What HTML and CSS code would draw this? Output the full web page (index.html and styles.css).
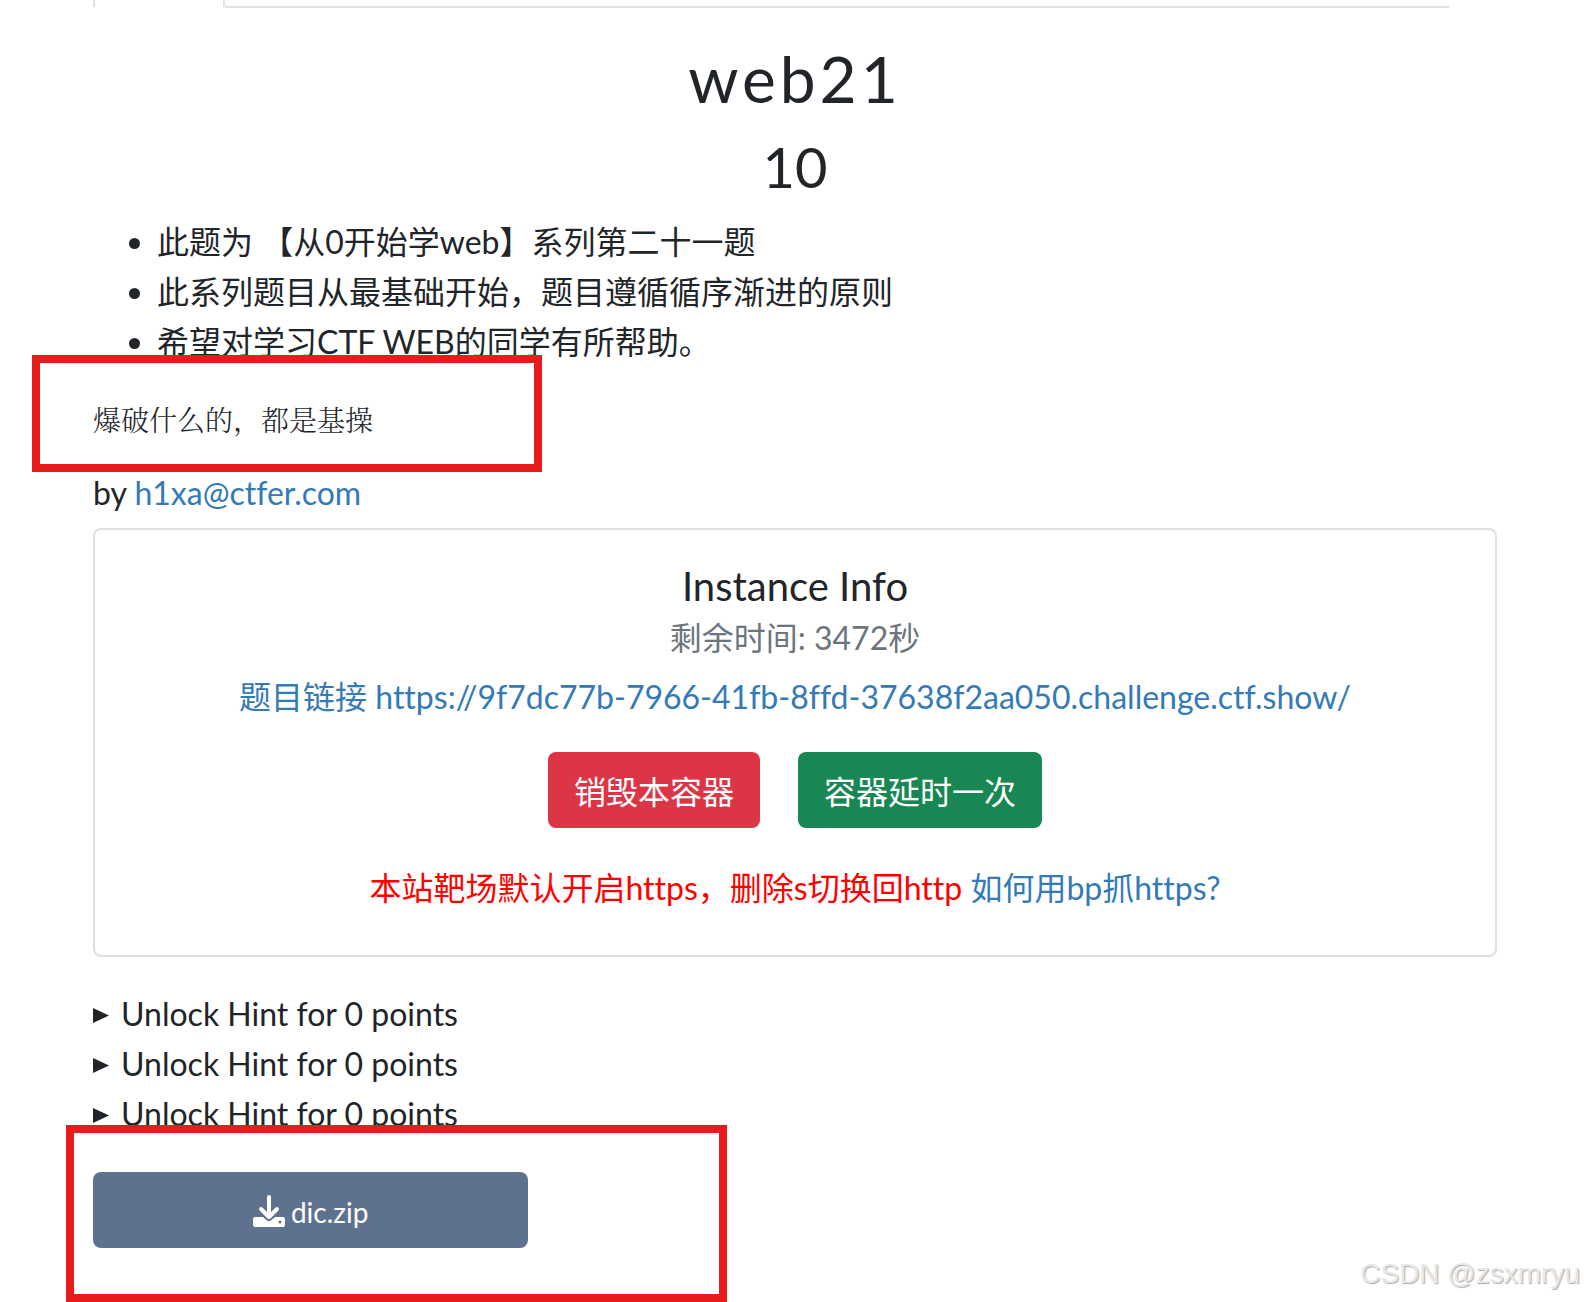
FILE: index.html
```html
<!DOCTYPE html>
<html lang="zh-CN">
<head>
<meta charset="utf-8">
<meta name="viewport" content="width=device-width, initial-scale=1">
<title>web21</title>
<link rel="stylesheet" href="styles.css">
</head>
<body>
<main class="challenge">
  <div class="tabs">
    <div class="tab-active"></div>
    <div class="tab-rest"></div>
  </div>

  <h1 class="name">web21</h1>
  <h2 class="value">10</h2>

  <ul class="intro">
    <li>此题为 【从0开始学web】系列第二十一题</li>
    <li>此系列题目从最基础开始，题目遵循循序渐进的原则</li>
    <li>希望对学习CTF WEB的同学有所帮助。</li>
  </ul>
  <pre class="note">爆破什么的，都是基操</pre>
  <p class="author">by <a href="mailto:h1xa@ctfer.com">h1xa@ctfer.com</a></p>

  <section class="card">
    <h3 class="card-title">Instance Info</h3>
    <p class="remaining">剩余时间: 3472秒</p>
    <p class="link"><a href="https://9f7dc77b-7966-41fb-8ffd-37638f2aa050.challenge.ctf.show/">题目链接 https://9f7dc77b-7966-41fb-8ffd-37638f2aa050.challenge.ctf.show/</a></p>
    <div class="actions">
      <button type="button" class="btn danger">销毁本容器</button>
      <button type="button" class="btn success">容器延时一次</button>
    </div>
    <p class="tip"><span class="warn">本站靶场默认开启https，删除s切换回http</span> <a href="#bp">如何用bp抓https?</a></p>
  </section>

  <div class="hints">
    <details><summary>Unlock Hint for 0 points</summary></details>
    <details><summary>Unlock Hint for 0 points</summary></details>
    <details><summary>Unlock Hint for 0 points</summary></details>
  </div>

  <a class="btn file" href="#dic.zip">
    <svg class="icon" viewBox="0 0 32 32" aria-hidden="true">
      <path d="M16 2v19M8 14l8 8 8-8" fill="none" stroke="currentColor" stroke-width="4" stroke-linecap="round" stroke-linejoin="round"/>
      <path fill="currentColor" fill-rule="evenodd" d="M2 22h8l4 3.500q2 1.500 4 0l4-3.500h8q2 0 2 2v6q0 2-2 2H2q-2 0-2-2v-6q0-2 2-2zM27 25.500a1.500 1.500 0 1 0 0 3 1.500 1.500 0 1 0 0-3z"/>
    </svg>
    <span>dic.zip</span>
  </a>
</main>

<div class="mark mark-note"></div>
<div class="mark mark-file"></div>
<div class="watermark">CSDN @zsxmryu</div>
</body>
</html>
```
FILE: styles.css
```css
* {
  box-sizing: border-box;
}

body {
  position: relative;
  margin: 0;
  background: #fff;
  color: #212529;
  font: 32px/50px Lato, "Noto Sans CJK SC", sans-serif;
  font-variant-ligatures: none;
}

h1, h2, h3, p, ul, pre {
  margin: 0;
  font-weight: 400;
}

a {
  color: #337ab7;
  text-decoration: none;
}

.challenge {
  padding: 0 87px 54px 93px;
}

.tabs {
  display: flex;
  height: 8px;
  margin-right: 48px;
}

.tab-active {
  width: 132px;
  height: 7px;
  border: solid #dee2e6;
  border-width: 0 2px;
}

.tab-rest {
  flex: 1;
  border-bottom: 2px solid #dee2e6;
}

.name {
  margin-top: 33px;
  font-size: 64px;
  line-height: 76px;
  letter-spacing: 4px;
  text-align: center;
}

.value {
  margin-top: 16px;
  font-size: 56px;
  line-height: 68px;
  text-align: center;
}

.intro {
  margin-top: 16px;
  padding-left: 64px;
}

.note {
  margin-top: 31px;
  font: 300 28px/42px "Noto Serif CJK SC", "Noto Sans CJK SC", serif;
}

.author {
  margin-top: 28px;
}

.card {
  margin-top: 10px;
  padding: 32px 32px 42px;
  border: 2px solid #dfdfdf;
  border-radius: 8px;
  text-align: center;
}

.card-title {
  font-size: 40px;
  line-height: 48px;
}

.remaining {
  margin-top: 3px;
  color: #6c757d;
}

.link {
  margin-top: 9px;
}

.actions {
  display: flex;
  justify-content: center;
  gap: 38px;
  margin-top: 30px;
}

.btn {
  padding: 16px 26px 12px;
  border: 0;
  border-radius: 8px;
  color: #fff;
  font: inherit;
  line-height: 48px;
}

.danger {
  background: #dc3545;
}

.success {
  background: #198754;
}

.tip {
  margin-top: 35px;
}

.warn {
  color: #f00;
}

.hints {
  margin-top: 32px;
}

summary {
  display: flex;
  align-items: center;
  list-style: none;
}

summary::before {
  width: 16px;
  height: 15px;
  margin-top: 3px;
  margin-right: 12px;
  background: currentColor;
  clip-path: polygon(0 0, 100% 50%, 0 100%);
  content: "";
}

.file {
  display: flex;
  align-items: center;
  justify-content: center;
  gap: 6px;
  width: 31%;
  margin-top: 33px;
  background: #5e728f;
  font-size: 28px;
}

.icon {
  width: 32px;
  height: 32px;
  margin-bottom: 2px;
}

/* Annotation frames drawn over the page */
.mark {
  position: absolute;
  border: 8px solid #e81c1c;
}

.mark-note {
  top: 355px;
  left: 32px;
  width: 510px;
  height: 117px;
}

.mark-file {
  top: 1125px;
  left: 66px;
  width: 661px;
  height: 177px;
}

.watermark {
  position: absolute;
  right: 4px;
  bottom: 8px;
  color: #e8e8e8;
  font: 28px/40px "Liberation Sans", sans-serif;
  text-shadow: 1px 1px 1px #aaa;
}
```
